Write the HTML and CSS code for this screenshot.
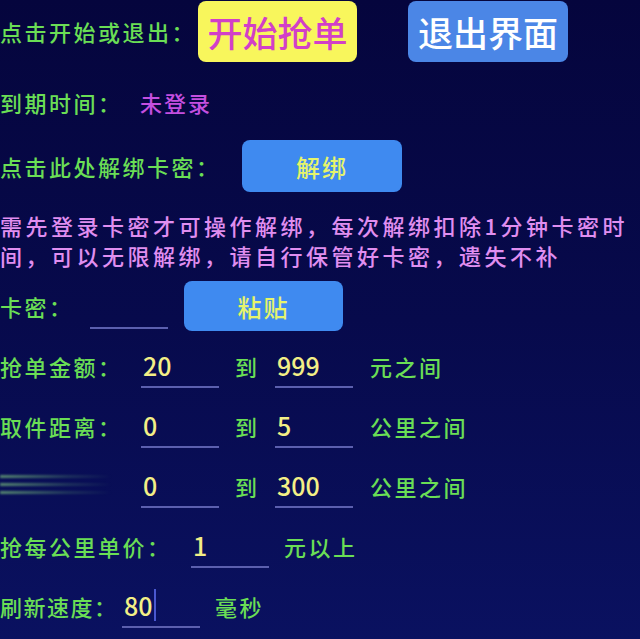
FILE: index.html
```html
<!DOCTYPE html>
<html lang="zh-CN">
<head>
    <meta charset="UTF-8">
    <meta name="viewport" content="width=device-width, initial-scale=1.0">
    <title>抢单设置</title>
    <link rel="stylesheet" href="styles.css">
</head>
<body>
    <div class="row top-row">
        <span class="label w-start">点击开始或退出：</span>
        <button class="btn btn-start">开始抢单</button>
        <button class="btn btn-exit">退出界面</button>
    </div>

    <div class="row expire-row">
        <span class="label w-expire">到期时间：</span>
        <span class="status">未登录</span>
    </div>

    <div class="row unbind-row">
        <span class="label w-unbind">点击此处解绑卡密：</span>
        <button class="btn btn-small">解绑</button>
    </div>

    <p class="notice">需先登录卡密才可操作解绑，每次解绑扣除1分钟卡密时间，可以无限解绑，请自行保管好卡密，遗失不补</p>

    <div class="row key-row">
        <span class="label w-key">卡密：</span>
        <div class="field key-field"></div>
        <button class="btn btn-small btn-paste">粘贴</button>
    </div>

    <div class="row form-row">
        <span class="label w-range">抢单金额：</span>
        <div class="field"><span>20</span></div>
        <span class="to">到</span>
        <div class="field"><span>999</span></div>
        <span class="unit">元之间</span>
    </div>

    <div class="row form-row">
        <span class="label w-range">取件距离：</span>
        <div class="field"><span>0</span></div>
        <span class="to">到</span>
        <div class="field"><span>5</span></div>
        <span class="unit">公里之间</span>
    </div>

    <div class="row form-row">
        <div class="label w-range smear">
            <i></i><i></i><i></i>
        </div>
        <div class="field"><span>0</span></div>
        <span class="to">到</span>
        <div class="field"><span>300</span></div>
        <span class="unit">公里之间</span>
    </div>

    <div class="row form-row">
        <span class="label w-price">抢每公里单价：</span>
        <div class="field"><span>1</span></div>
        <span class="unit">元以上</span>
    </div>

    <div class="row form-row">
        <span class="label w-speed">刷新速度：</span>
        <div class="field"><span>80</span><span class="caret"></span></div>
        <span class="unit">毫秒</span>
    </div>
</body>
</html>
```

FILE: styles.css
```css
body {
    margin: 0;
    padding: 0;
    height: 639px;
    overflow: hidden;
    background: linear-gradient(to bottom, #05053d 0%, #070a4c 50%, #0a1160 100%);
    font-family: "Noto Sans CJK SC", "Noto Sans", sans-serif;
    font-weight: 500;
    color: #6ade55;
}
.row {
    display: flex;
    align-items: center;
}
.label {
    flex: none;
    font-size: 22px;
    letter-spacing: 2.5px;
    white-space: nowrap;
}
.w-start { width: 198px; }
.w-expire { width: 140px; }
.w-unbind { width: 242px; }
.w-key { width: 90px; }
.w-range { width: 141px; }
.w-price { width: 191px; }
.w-speed { width: 122px; letter-spacing: 1.5px; }

.btn {
    flex: none;
    border: none;
    border-radius: 8px;
    font-family: inherit;
    font-weight: 500;
    padding: 0;
    cursor: pointer;
}
.top-row {
    height: 62px;
}
.btn-start {
    width: 159px;
    height: 61px;
    background-color: #f8f65c;
    color: #d23fc8;
    font-size: 35px;
}
.btn-exit {
    width: 160px;
    height: 61px;
    margin-left: 51px;
    background-color: #4b86e6;
    color: #ffffff;
    font-size: 35px;
}
.expire-row {
    height: 40px;
    margin-top: 20px;
}
.status {
    font-size: 22px;
    letter-spacing: 2px;
    color: #c44fe0;
}
.unbind-row {
    height: 52px;
    margin-top: 18px;
}
.btn-small {
    width: 160px;
    height: 52px;
    background-color: #3f8af0;
    color: #e6f46a;
    font-size: 24px;
    letter-spacing: 2px;
}
.notice {
    margin: 18px 0 0 0;
    font-size: 22px;
    line-height: 30px;
    letter-spacing: 3.5px;
    color: #e08ef0;
}
.key-row {
    height: 50px;
    margin-top: 11px;
    align-items: flex-end;
}
.key-row .label {
    align-self: center;
}
.btn-paste {
    height: 50px;
    width: 159px;
    margin-left: 16px;
}
.field {
    flex: none;
    box-sizing: border-box;
    width: 78px;
    height: 44px;
    border-bottom: 2px solid #5b5fae;
    padding-left: 2px;
    display: flex;
    align-items: center;
    font-size: 25px;
    color: #f3ef86;
}
.key-field {
    margin-bottom: 2px;
    height: 40px;
}
.form-row {
    height: 60px;
}
.key-row + .form-row {
    margin-top: 5px;
}
.to {
    flex: none;
    width: 40px;
    margin-left: 16px;
    font-size: 22px;
}
.unit {
    margin-left: 15px;
    font-size: 22px;
    letter-spacing: 2.5px;
}
.to + .field + .unit {
    margin-left: 17px;
}
.caret {
    display: inline-block;
    width: 2px;
    height: 32px;
    margin-left: 1px;
    background-color: #4a58d0;
}
.smear {
    display: flex;
    flex-direction: column;
    gap: 5px;
    margin-top: -4px;
    filter: blur(0.8px);
}
.smear i {
    display: block;
    width: 112px;
    height: 3px;
    background: linear-gradient(to right, rgba(140, 220, 130, 0.6), rgba(120, 200, 120, 0.2) 60%, rgba(120, 200, 120, 0));
}
```
